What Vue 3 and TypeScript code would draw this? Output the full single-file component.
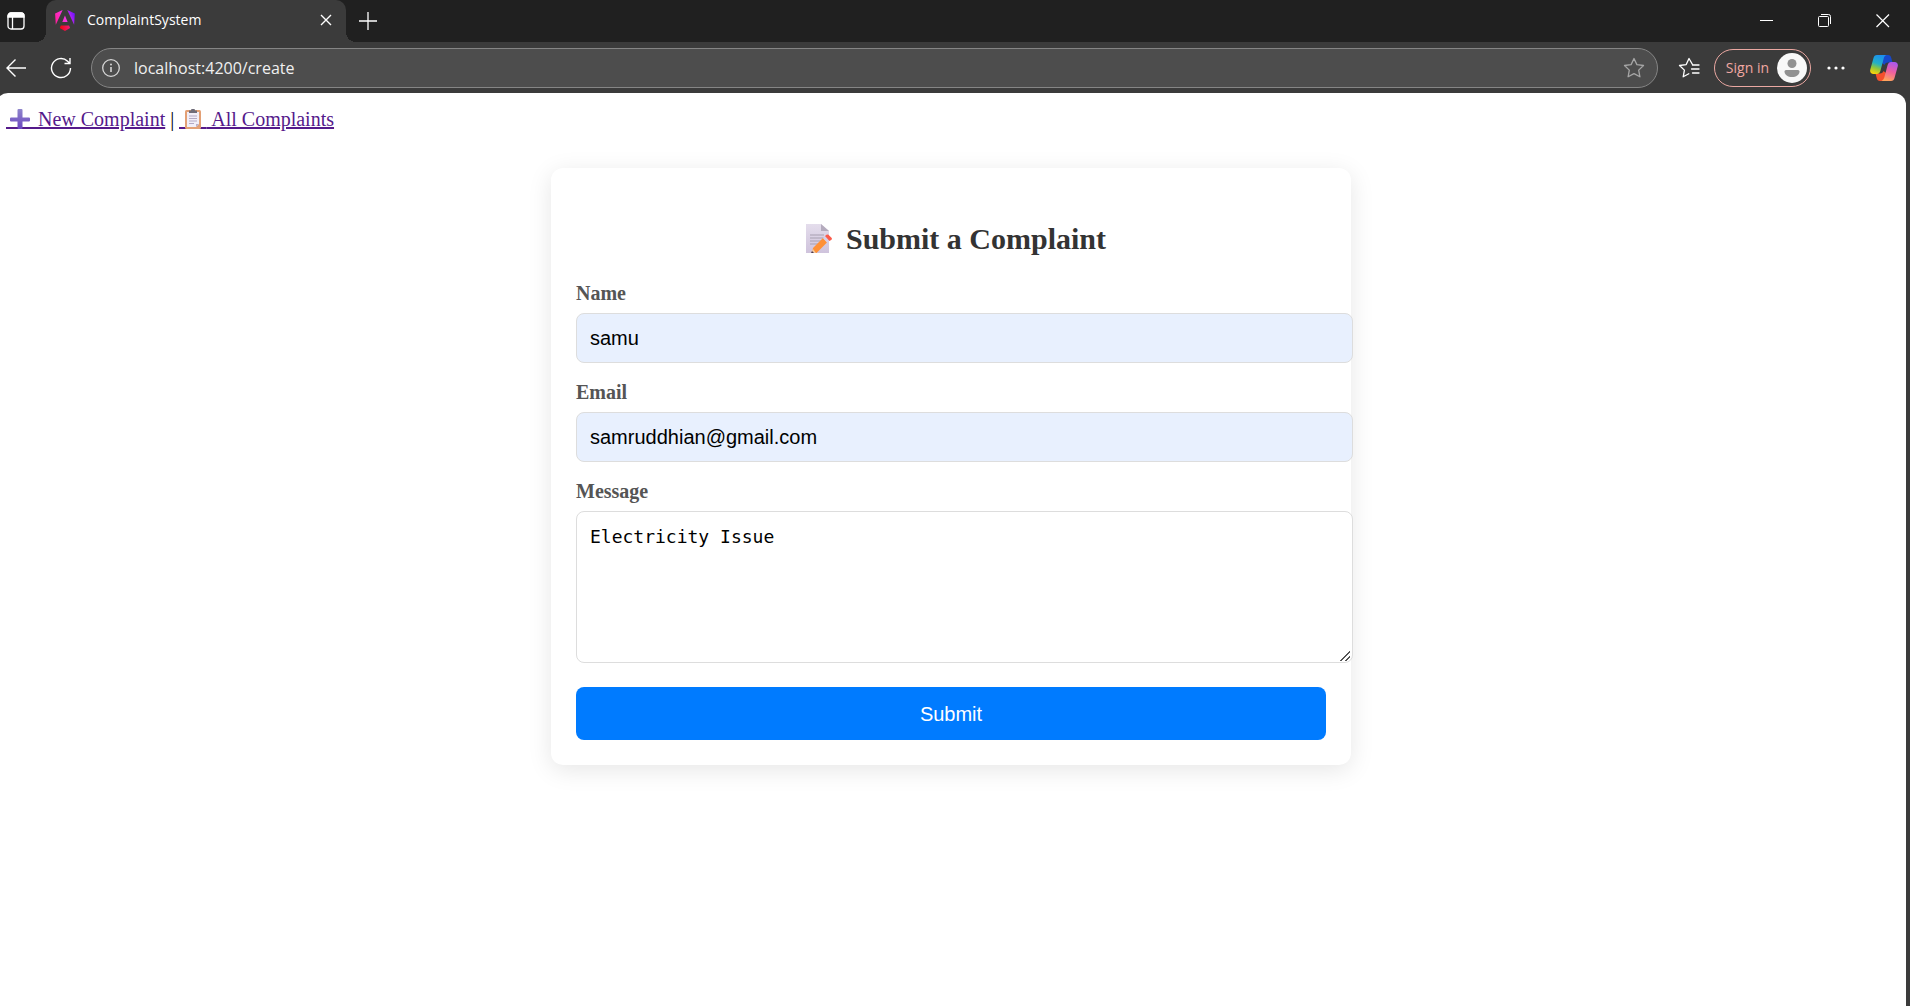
<script setup lang="ts">
import { ref } from 'vue'

const address = ref('localhost:4200/create')
const name = ref('samu')
const email = ref('samruddhian@gmail.com')
const message = ref('Electricity Issue')
</script>

<template>
  <div class="browser">
    <header class="tabstrip">
      <button class="icon-btn tab-actions" aria-label="Tab actions">
        <svg width="20" height="20" viewBox="0 0 20 20" fill="none" stroke="#fff" stroke-width="1.3">
          <rect x="2" y="2" width="16" height="16" rx="3" />
          <path d="M2 6V5a3 3 0 0 1 3-3h10a3 3 0 0 1 3 3v1z" fill="#fff" />
          <path d="M6.5 6v12" />
        </svg>
      </button>
      <div class="tab">
        <svg class="favicon" width="20" height="21" viewBox="0 0 223 236">
          <defs>
            <linearGradient id="ng" x1="0" y1="0.6" x2="1" y2="0.3">
              <stop offset="0" stop-color="#ff1fa0" />
              <stop offset="0.5" stop-color="#f637e3" />
              <stop offset="1" stop-color="#6a10ff" />
            </linearGradient>
            <linearGradient id="ngb" x1="0" y1="0" x2="1" y2="0">
              <stop offset="0" stop-color="#f0060b" />
              <stop offset="1" stop-color="#ee1b7c" />
            </linearGradient>
          </defs>
          <path d="m222 39-8 126L137 0zM111 63l30 73H81zM8 165 0 39 85 0z" fill="url(#ng)" />
          <path d="m169 202-58 33-58-33 12-29h92z" fill="url(#ngb)" />
        </svg>
        <span class="tab-title">ComplaintSystem</span>
        <button class="icon-btn" aria-label="Close tab">
          <svg width="12" height="12" viewBox="0 0 12 12" stroke="#fff" stroke-width="1.4"><path d="M1 1l10 10M11 1 1 11" /></svg>
        </button>
      </div>
      <button class="icon-btn new-tab" aria-label="New tab">
        <svg width="18" height="18" viewBox="0 0 18 18" stroke="#fff" stroke-width="1.3"><path d="M9 0v18M0 9h18" /></svg>
      </button>
      <div class="window-controls">
        <button class="icon-btn" aria-label="Minimize">
          <svg width="14" height="14" viewBox="0 0 14 14" stroke="#fff"><path d="M0 6.500h13" /></svg>
        </button>
        <button class="icon-btn" aria-label="Restore">
          <svg width="14" height="14" viewBox="0 0 14 14" fill="none" stroke="#fff">
            <rect x="0.500" y="2.500" width="10" height="10" rx="1" />
            <path d="M3 .5h7.500a2 2 0 0 1 2 2V10" />
          </svg>
        </button>
        <button class="icon-btn" aria-label="Close">
          <svg width="14" height="14" viewBox="0 0 14 14" stroke="#fff" stroke-width="1.2"><path d="M.5.5l12.500 12.500M13 .5.5 13" /></svg>
        </button>
      </div>
    </header>

    <div class="toolbar">
      <button class="icon-btn back" aria-label="Back">
        <svg width="20" height="20" viewBox="0 0 20 20" fill="none" stroke="#fff" stroke-width="1.4"><path d="M9.500 1.500 1 10l8.500 8.500M1 10h19" /></svg>
      </button>
      <button class="icon-btn reload" aria-label="Reload">
        <svg width="22" height="22" viewBox="0 0 22 22" fill="none" stroke="#fff" stroke-width="1.4">
          <path d="M20.500 11A9.500 9.500 0 1 1 17.600 4.200L20 6.500M20 1v5.500h-5.500" />
        </svg>
      </button>
      <div class="address">
        <svg width="18" height="18" viewBox="0 0 18 18" fill="none" stroke="#d6d6d6" stroke-width="1.3">
          <circle cx="9" cy="9" r="8.300" />
          <path d="M9 8v5" stroke-width="1.600" />
          <circle cx="9" cy="5.500" r="1" fill="#d6d6d6" stroke="none" />
        </svg>
        <input v-model="address" type="text" aria-label="Address" />
        <button class="icon-btn" aria-label="Add to favorites">
          <svg width="22" height="22" viewBox="0 0 22 22" fill="none" stroke="#a6a6a6" stroke-width="1.3" stroke-linejoin="round">
            <path d="M11 1.500l2.900 6.100 6.600.9-4.800 4.600 1.200 6.700-5.900-3.200-5.900 3.200 1.200-6.700L1.500 8.500l6.600-.9z" />
          </svg>
        </button>
      </div>
      <button class="icon-btn favorites" aria-label="Favorites">
        <svg width="22" height="22" viewBox="0 0 22 22" fill="none" stroke="#fff" stroke-width="1.3" stroke-linejoin="round" stroke-linecap="round">
          <path d="M14.500 7.500 11 1.500 8.200 7.600l-6.700.9 4.900 4.600-1.200 6.700 5.600-3" />
          <path d="M14.500 8h6.500M13.500 12h7.500M14.500 16h6.500" />
        </svg>
      </button>
      <button class="sign-in">
        <span>Sign in</span>
        <svg width="30" height="30" viewBox="0 0 30 30">
          <circle cx="15" cy="15" r="15" fill="#f8f8f8" />
          <circle cx="15" cy="10.500" r="4.500" fill="#919191" />
          <path d="M9 17h12a1.500 1.500 0 0 1 1.500 1.500c0 3.500-3.500 5.500-7.500 5.500s-7.500-2-7.500-5.500A1.500 1.500 0 0 1 9 17z" fill="#919191" />
        </svg>
      </button>
      <button class="icon-btn more" aria-label="Settings and more">
        <svg width="18" height="4" viewBox="0 0 18 4" fill="#fff"><circle cx="2" cy="2" r="1.600" /><circle cx="9" cy="2" r="1.600" /><circle cx="16" cy="2" r="1.600" /></svg>
      </button>
      <button class="icon-btn copilot" aria-label="Copilot">
        <svg width="28" height="26" viewBox="0 0 28 26">
          <defs>
            <linearGradient id="cpa" x1="0.600" y1="0" x2="0.300" y2="1">
              <stop offset="0" stop-color="#1c8fee" />
              <stop offset="0.450" stop-color="#22b0c8" />
              <stop offset="0.700" stop-color="#8cc63f" />
              <stop offset="1" stop-color="#fbd20a" />
            </linearGradient>
            <linearGradient id="cpb" x1="0.700" y1="0" x2="0.400" y2="1">
              <stop offset="0" stop-color="#a858ee" />
              <stop offset="0.500" stop-color="#ee5fa0" />
              <stop offset="1" stop-color="#ffa45c" />
            </linearGradient>
          </defs>
          <path d="M12 0h6c2 0 2.800 1.300 3.300 3l1.200 4.500H18c-2 0-3 1-3.500 2.500L12 8z" fill="#1848c8" />
          <path d="M16 26h-6c-2 0-2.800-1.300-3.300-3L5.500 18.500H10c2 0 3-1 3.500-2.500l2.500 2z" fill="#f4502c" />
          <path d="M7 0h9.500c-1.500.6-2.300 1.800-2.800 3.400L10.500 15.500C9.900 17.500 8.900 19 6.900 19H3.500C.8 19-.4 17 .3 14.500L3.500 3C4 1.200 5 0 7 0z" fill="url(#cpa)" />
          <path d="M21 26h-9.500c1.500-.6 2.300-1.800 2.800-3.400l3.200-12.100c.6-2 1.600-3.500 3.600-3.500h3.400c2.700 0 3.900 2 3.200 4.500L24.500 23c-.5 1.800-1.500 3-3.500 3z" fill="url(#cpb)" />
        </svg>
      </button>
    </div>

    <main class="page">
      <nav>
        <a href="#create"><span class="emoji"><svg width="20" height="20" viewBox="0 0 20 20">
          <defs>
            <linearGradient id="plus" x1="0" y1="0" x2="0" y2="1">
              <stop offset="0" stop-color="#8f86cc" />
              <stop offset="1" stop-color="#6a45c0" />
            </linearGradient>
          </defs>
          <path d="M8.500 0h3a1 1 0 0 1 1 1v7.500H19a1 1 0 0 1 1 1v2a1 1 0 0 1-1 1h-6.500V19a1 1 0 0 1-1 1h-3a1 1 0 0 1-1-1v-6.500H1a1 1 0 0 1-1-1v-2a1 1 0 0 1 1-1h6.500V1a1 1 0 0 1 1-1z" fill="url(#plus)" />
        </svg></span>&nbsp;New Complaint</a> |
        <a href="#all"><span class="emoji"><svg width="20" height="20" viewBox="-2 0 20 20">
          <rect x="0" y="1" width="16" height="19" rx="1.500" fill="#e3a075" />
          <path d="M2 3h12v12l-3 3H2z" fill="#f1eef8" />
          <path d="M14 15h-3v3z" fill="#b9b0c9" />
          <path d="M4 1.500h2a2 2 0 0 1 4 0h2V4H4z" fill="#6f6c78" />
          <path d="M4 7h8M4 9.500h8M4 12h8M4 14.500h5" stroke="#b3a9c4" />
        </svg></span>&nbsp;All Complaints</a>
      </nav>

      <form class="card" @submit.prevent>
        <h2>
          <svg width="38" height="32" viewBox="-10 0 38 32">
            <defs>
              <linearGradient id="sheet" x1="0" y1="0" x2="0" y2="1">
                <stop offset="0" stop-color="#e4ddec" />
                <stop offset="1" stop-color="#cfc3dc" />
              </linearGradient>
            </defs>
            <path d="M0 1h15l8 7v22H0z" fill="url(#sheet)" />
            <path d="M15 1l8 7h-8z" fill="#b4abbd" />
            <path d="M4 12h14M4 15h14M4 18h12M4 21h8" stroke="#a79fb0" />
            <path d="M7 25 17 15l4 4.500L10.500 30H6z" fill="#ff9137" />
            <path d="M17 15l2-2 4.500 4.500-2.500 2z" fill="#d9cfe6" />
            <path d="M19 13l1.500-1.200q1-.8 2 0l3 3q1 1 0 2l-2 1.200z" fill="#fb5b4b" />
            <path d="M7 26l3 4H5z" fill="#f3c9a0" />
            <path d="M6 28l2 2H5z" fill="#4a3a52" />
          </svg>
          Submit a Complaint
        </h2>
        <label for="name">Name</label>
        <input id="name" v-model="name" type="text" />
        <label for="email">Email</label>
        <input id="email" v-model="email" type="email" />
        <label for="message">Message</label>
        <textarea id="message" v-model="message" spellcheck="false"></textarea>
        <button type="submit">Submit</button>
      </form>
    </main>
  </div>
</template>

<style scoped>
.browser {
  display: flex;
  flex-direction: column;
  min-height: 100vh;
  overflow: hidden;
  background: #3b3b3b;
  font-family: "Open Sans", "Noto Sans", sans-serif;
  color: #fff;
}

.icon-btn {
  display: flex;
  flex: none;
  padding: 0;
  border: 0;
  background: none;
}

.tabstrip {
  display: flex;
  align-items: center;
  height: 42px;
  background: #202020;
}

.tab-actions {
  margin: 0 20px 0 6px;
}

.tab {
  position: relative;
  display: flex;
  align-items: center;
  box-sizing: border-box;
  width: 300px;
  height: 42px;
  padding: 0 14px 2px 9px;
  border-radius: 10px 10px 0 0;
  background: #3b3b3b;
}

.tab::before,
.tab::after {
  content: "";
  position: absolute;
  bottom: 0;
  width: 10px;
  height: 10px;
}

.tab::before {
  right: 100%;
  background: radial-gradient(circle at 0 0, #202020 10px, #3b3b3b 10px);
}

.tab::after {
  left: 100%;
  background: radial-gradient(circle at 100% 0, #202020 10px, #3b3b3b 10px);
}

.tab-title {
  flex: 1;
  margin-left: 12px;
  font-size: 14px;
  line-height: 20px;
}

.new-tab {
  margin-left: 13px;
}

.window-controls {
  display: flex;
  gap: 44px;
  margin-left: auto;
  padding-right: 20px;
}

.toolbar {
  display: flex;
  align-items: center;
  height: 51px;
}

.back {
  margin-left: 6px;
}

.reload {
  margin: 0 19px 0 24px;
}

.address {
  display: flex;
  flex: 1;
  align-items: center;
  box-sizing: border-box;
  height: 40px;
  padding: 0 12px 0 10px;
  border: 1px solid #858585;
  border-radius: 20px;
  background: #4d4d4d;
}

.address input {
  flex: 1;
  min-width: 0;
  margin-left: 14px;
  padding: 0;
  border: 0;
  background: none;
  font: 16px/24px "Open Sans", "Noto Sans", sans-serif;
  color: #f0f0f0;
}

.favorites {
  margin: 0 14px 0 20px;
}

.sign-in {
  display: flex;
  align-items: center;
  gap: 8px;
  height: 38px;
  padding: 0 3px 0 11px;
  border: 1px solid #eba8a2;
  border-radius: 19px;
  background: none;
  font: 14px/20px "Open Sans", "Noto Sans", sans-serif;
  color: #f0a8a2;
}

.more {
  margin: 0 25px 0 16px;
}

.copilot {
  margin-right: 12px;
}

.page {
  flex: 1;
  margin: 0 4px 0 -4px;
  padding: 10px;
  border-radius: 12px 12px 0 0;
  background: #fff;
  font-family: "Liberation Serif", "Times New Roman", serif;
  font-size: 20px;
  color: #000;
}

nav {
  height: 30px;
  line-height: 32px;
}

nav a {
  color: #551a8b;
  text-decoration-thickness: 2px;
  text-underline-offset: 1px;
}

.emoji {
  display: inline-block;
  height: 18px;
  padding: 0 3px 0 4px;
  border-bottom: 2px solid #551a8b;
  vertical-align: -3px;
}

.emoji svg {
  display: block;
}

.card {
  display: flex;
  flex-direction: column;
  box-sizing: border-box;
  max-width: 800px;
  margin: 35px auto 0;
  padding: 25px;
  border-radius: 12px;
  background: #fff;
  box-shadow: 0 5px 25px rgba(0, 0, 0, 0.1);
}

h2 {
  display: flex;
  justify-content: center;
  align-items: center;
  gap: 12px;
  margin: 29px 0 26px;
  font-size: 30px;
  line-height: 34px;
  color: #333;
}

label {
  margin-bottom: 9px;
  font-weight: bold;
  line-height: 22px;
  color: #555;
}

.card input,
textarea {
  box-sizing: border-box;
  width: calc(100% + 27px);
  margin-bottom: 18px;
  padding: 13px;
  border: 1px solid #ddd;
  border-radius: 8px;
  color: #000;
}

.card input {
  height: 50px;
  background: #e8f0fe;
  font: 20px/24px "Liberation Sans", Arial, sans-serif;
}

textarea {
  height: 152px;
  margin-bottom: 24px;
  background: #fff;
  font: 18px/24px "DejaVu Sans Mono", monospace;
  resize: vertical;
}

textarea::-webkit-resizer {
  background: linear-gradient(
      135deg,
      transparent 7px,
      #555 7px,
      #555 8px,
      transparent 8px,
      transparent 10px,
      #555 10px,
      #555 12px,
      transparent 12px
    )
    3px 4px / 10px 10px no-repeat;
}

.card button {
  height: 53px;
  border: 0;
  border-radius: 8px;
  background: #007bff;
  font: 20px/24px "Liberation Sans", Arial, sans-serif;
  color: #fff;
}
</style>

<style>
body {
  margin: 0;
}
</style>
